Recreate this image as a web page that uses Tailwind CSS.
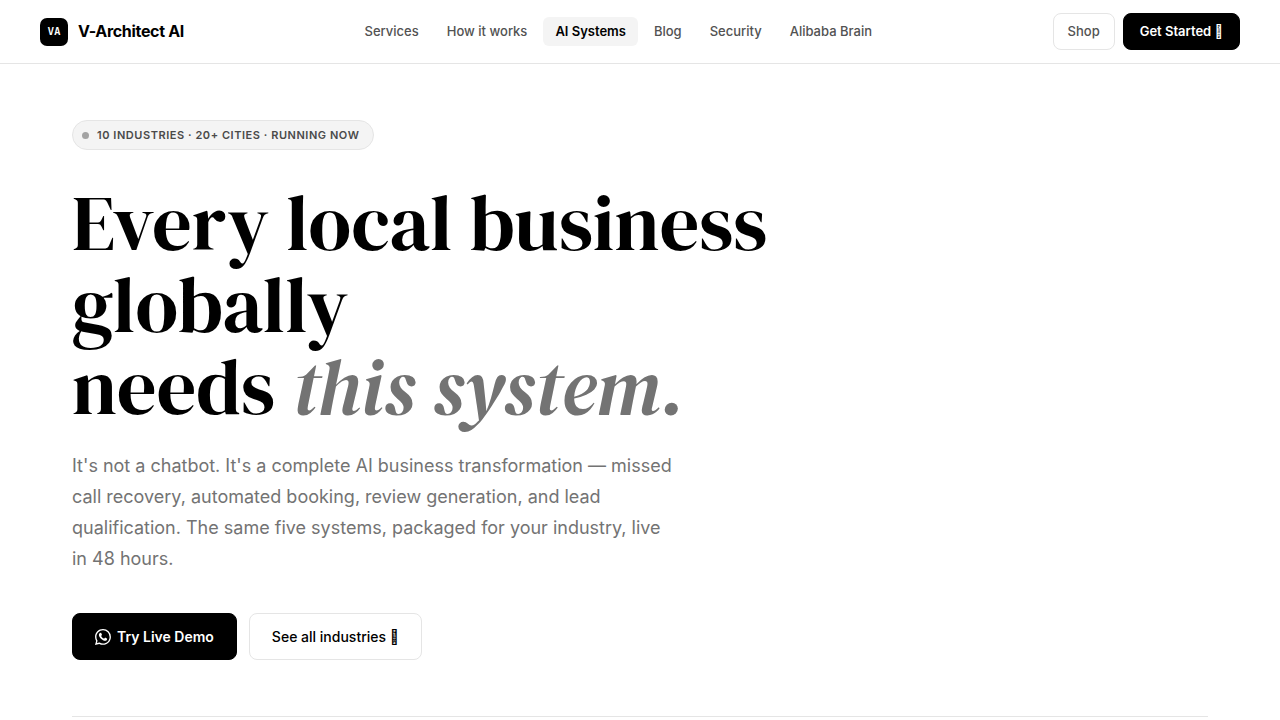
<!DOCTYPE html>
<html lang="en">
<head>
  <meta charset="UTF-8">
  <meta name="viewport" content="width=device-width, initial-scale=1.0">
  <title>AI Systems | V-Architect AI</title>
  <script src="https://cdn.jsdelivr.net/npm/@tailwindcss/browser@4"></script>
</head>
<body class="bg-white text-black font-['Inter',sans-serif] antialiased">
  <!-- Navigation -->
  <header class="h-16 px-10 flex items-center justify-between border-b border-[#e5e5e5]">
    <a href="#" class="flex items-center gap-2.5">
      <span class="size-7 rounded-[7px] bg-black text-white flex items-center justify-center font-['JetBrains_Mono','Liberation_Mono',monospace] text-[11px] font-bold">VA</span>
      <span class="text-base leading-[23px] font-bold tracking-[-0.02em]">V-Architect AI</span>
    </a>
    <nav class="flex items-center gap-1 text-[13px] leading-[17px] font-medium text-[#525252]">
      <a href="#" class="px-3 py-1.5 rounded-md">Services</a>
      <a href="#" class="px-3 py-1.5 rounded-md">How it works</a>
      <a href="#" class="px-3 py-1.5 rounded-md bg-[#f4f4f4] text-black font-semibold">AI Systems</a>
      <a href="#" class="px-3 py-1.5 rounded-md">Blog</a>
      <a href="#" class="px-3 py-1.5 rounded-md">Security</a>
      <a href="#" class="px-3 py-1.5 rounded-md">Alibaba Brain</a>
    </nav>
    <div class="flex items-center gap-2 text-[13px] leading-[15px]">
      <a href="#" class="px-3.5 py-2.5 rounded-lg border border-[#e5e5e5] font-medium text-[#525252]">Shop</a>
      <a href="#" class="px-4 py-2.5 rounded-lg border border-black bg-black text-white font-semibold">Get Started &#x10FFFD;</a>
    </div>
  </header>

  <!-- Hero -->
  <main class="px-[72px] pt-14">
    <div class="inline-flex items-center gap-2 h-[30px] pl-[9px] pr-3.5 rounded-full border border-[#e5e5e5] bg-[#f4f4f4] text-[11px] font-semibold tracking-wider text-[#4a4a4a]">
      <span class="size-[7px] rounded-full bg-[#a3a3a3]"></span>
      10 INDUSTRIES · 20+ CITIES · RUNNING NOW
    </div>
    <h1 class="mt-8 max-w-[820px] font-['DM_Serif_Display','Liberation_Serif',serif] text-[78px] leading-[82px] font-normal">
      Every local business globally<br>needs <em class="text-[#737373]">this system.</em>
    </h1>
    <p class="mt-[22px] max-w-[600px] text-lg leading-[31px] text-[#737373]">
      It's not a chatbot. It's a complete AI business transformation — missed call recovery, automated booking, review generation, and lead qualification. The same five systems, packaged for your industry, live in 48 hours.
    </p>
    <div class="mt-[39px] flex items-center gap-3 text-sm">
      <a href="#" class="h-[47px] px-[22px] flex items-center gap-1.5 rounded-lg border border-black bg-black text-white font-semibold">
        <svg class="size-4" viewBox="0 0 16 16" fill="currentColor" aria-hidden="true">
          <path d="M13.601 2.326A7.85 7.85 0 0 0 7.994 0C3.627 0 .068 3.558.064 7.926c0 1.399.366 2.76 1.057 3.965L0 16l4.204-1.102a7.9 7.9 0 0 0 3.79.965h.004c4.368 0 7.926-3.558 7.93-7.93A7.9 7.9 0 0 0 13.6 2.326zM7.994 14.521a6.6 6.6 0 0 1-3.356-.92l-.24-.144-2.494.654.666-2.433-.156-.251a6.56 6.56 0 0 1-1.007-3.505c0-3.626 2.957-6.584 6.591-6.584a6.56 6.56 0 0 1 4.66 1.931 6.56 6.56 0 0 1 1.928 4.66c-.004 3.639-2.961 6.592-6.592 6.592"/>
          <path d="M5.75 3.8c.25 0 .45.1.55.35l.6 1.4c.1.25.05.45-.1.65l-.55.65c-.1.15-.1.25 0 .4.7 1.15 1.5 1.85 2.65 2.35.2.1.3.05.4-.1l.6-.75c.15-.2.3-.2.5-.1l1.5.75c.25.1.3.25.25.5-.15 1.2-1 1.85-2.15 1.85-1.1 0-2.7-.75-4-2.05C4.7 8.4 3.9 6.9 3.9 5.9c0-.95.65-2.1 1.85-2.1z"/>
        </svg>
        Try Live Demo
      </a>
      <a href="#" class="h-[47px] px-[22px] flex items-center rounded-lg border border-[#e5e5e5] font-medium">See all industries &#x10FFFD;</a>
    </div>
    <hr class="mt-14 border-[#e5e5e5]">
  </main>
</body>
</html>
